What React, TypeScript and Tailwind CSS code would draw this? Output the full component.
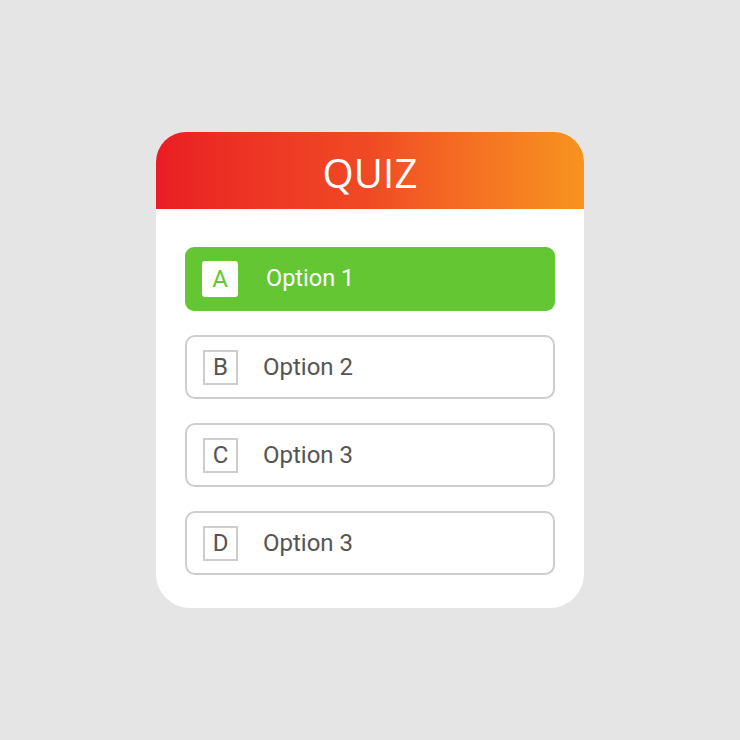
import React from 'react';

type Choice = { key: string; label: string; picked?: boolean };

const choices: Choice[] = [
  { key: 'A', label: 'Option 1', picked: true },
  { key: 'B', label: 'Option 2' },
  { key: 'C', label: 'Option 3' },
  { key: 'D', label: 'Option 3' },
];

const ChoiceRow: React.FC<{ choice: Choice }> = ({ choice }) => {
  if (choice.picked) {
    return (
      <div className="flex h-[64px] items-center rounded-[9px] bg-[#63c632] pl-[17px]">
        <div className="flex h-[36px] w-[36px] items-center justify-center rounded-[3px] bg-white text-[24px] text-[#63c632]">
          {choice.key}
        </div>
        <span className="ml-[28px] text-[23.5px] text-white">{choice.label}</span>
      </div>
    );
  }
  return (
    <div className="flex h-[64px] items-center rounded-[10px] border-2 border-[#cdcdcd] bg-white pl-[16px]">
      <div className="flex h-[35px] w-[35px] items-center justify-center border-2 border-[#cdcdcd] text-[24px] text-[#555555]">
        {choice.key}
      </div>
      <span className="ml-[25px] text-[24px] text-[#555555]">{choice.label}</span>
    </div>
  );
};

export default function App() {
  return (
    <div className="flex h-[740px] w-[740px] items-start justify-center bg-[#e5e5e5] pt-[132px] font-['Roboto',sans-serif]">
      <div className="w-[428px] overflow-hidden rounded-t-[30px] rounded-b-[34px] bg-white">
        <div className="flex h-[77px] items-center justify-center bg-gradient-to-r from-[#ea1c24] via-[#f04a24] to-[#f7931f]">
          <span className="pt-[4px] font-['Open_Sans',sans-serif] text-[40px] tracking-[0.2px] text-white">QUIZ</span>
        </div>
        <div className="flex flex-col gap-[24px] px-[29px] pb-[33px] pt-[38px]">
          {choices.map((c, i) => (
            <ChoiceRow key={i} choice={c} />
          ))}
        </div>
      </div>
    </div>
  );
}
